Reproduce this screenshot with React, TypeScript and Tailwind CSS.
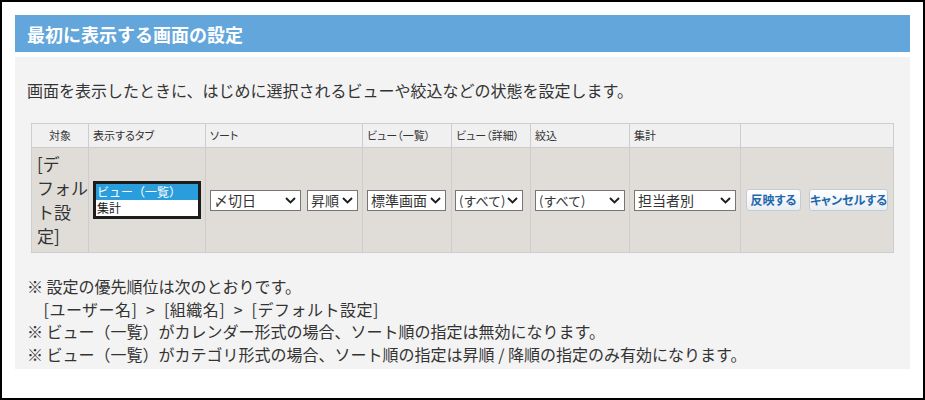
import React from "react";

function Chevron() {
  return (
    <svg width="11" height="7" viewBox="0 0 11 7" className="shrink-0">
      <path d="M1 1L5.5 5.5L10 1" fill="none" stroke="#1e1e1e" strokeWidth="1.9" />
    </svg>
  );
}

function Select({ w, label, small }: { w: string; label: string; small?: boolean }) {
  return (
    <div
      className={`${w} h-[21px] shrink-0 border border-[#767676] bg-white flex items-center justify-between pl-[3px] pr-[4px] ${small ? "text-[13px]" : "text-[14px]"} leading-none text-[#333]`}
    >
      <span className="whitespace-nowrap">{label}</span>
      <Chevron />
    </div>
  );
}

function Btn({ w, label }: { w: string; label: string }) {
  return (
    <div
      className={`${w} h-[22px] shrink-0 rounded-[3px] border border-[#c3ccd6] bg-gradient-to-b from-[#ffffff] to-[#e9eef3] flex items-center justify-center text-[12px] font-bold leading-none text-[#1f68ad] whitespace-nowrap [font-feature-settings:'palt']`}
    >
      {label}
    </div>
  );
}

export default function App() {
  const head = "bg-[#f0f0f0] flex items-center px-[4px] text-[11px] leading-none text-[#333] whitespace-nowrap [font-feature-settings:'palt']";
  const body = "bg-[#e0ddd8] flex items-center px-[4px]";
  return (
    <div className="w-[925px] h-[400px] border-2 border-black box-border pt-[13px] px-[13px] bg-white font-['Noto_Sans_CJK_JP','Noto_Sans',sans-serif] text-[#333]">
      <div className="h-[37px] bg-[#62a6dc] flex items-center pl-[12px] text-[18px] font-bold leading-none text-white">
        最初に表示する画面の設定
      </div>
      <div className="mt-[5px] h-[312px] bg-[#f3f3f3] pt-[21px] pl-[16px] pr-[17px]">
        <div className="-ml-[4px] text-[16px] leading-[24px] text-[#333]">
          画面を表示したときに、はじめに選択されるビューや絞込などの状態を設定します。
        </div>
        <div className="mt-[21px] grid grid-cols-[56px_116px_156px_88px_78px_98px_110px_152px] grid-rows-[23px_104px] gap-px p-px bg-[#cdcdcd] w-[863px]">
          <div className={`${head} justify-center`}>対象</div>
          <div className={head}>表示するタブ</div>
          <div className={head}>ソート</div>
          <div className={head}>ビュー（一覧）</div>
          <div className={head}>ビュー（詳細）</div>
          <div className={head}>絞込</div>
          <div className={head}>集計</div>
          <div className={head}></div>

          <div className="bg-[#e0ddd8] flex items-center pl-[5px] text-[17px] leading-[24px] text-[#333]">
            <div>
              [デ<br />フォル<br />ト設<br />定]
            </div>
          </div>
          <div className={body}>
            <div className="w-[108px] h-[38px] border-[3px] border-[#1c1c1c] bg-white flex flex-col text-[12px] text-[#222]">
              <div className="h-[16px] leading-[16px] bg-[#2a9edd] text-white pl-[1px] whitespace-nowrap">ビュー（一覧）</div>
              <div className="h-[16px] leading-[16px] pl-[1px]">集計</div>
            </div>
          </div>
          <div className={`${body} gap-[6px]`}>
            <Select w="w-[91px]" label="〆切日" />
            <Select w="w-[51px]" label="昇順" />
          </div>
          <div className={body}>
            <Select w="w-[79px]" label="標準画面" />
          </div>
          <div className={`${body} pl-[3px]`}>
            <Select w="w-[68px]" label="(すべて)" small />
          </div>
          <div className={body}>
            <Select w="w-[90px]" label="(すべて)" small />
          </div>
          <div className={body}>
            <Select w="w-[102px]" label="担当者別" />
          </div>
          <div className={`${body} pl-[5px] gap-[8px]`}>
            <Btn w="w-[55px]" label="反映する" />
            <Btn w="w-[79px]" label="キャンセルする" />
          </div>
        </div>
        <div className="mt-[22px] -ml-[4px] text-[16px] leading-[22.7px] text-[#333]">
          <div>※ 設定の優先順位は次のとおりです。</div>
          <div className="tracking-[0.5px]">　[ユーザー名]&ensp;&gt;&ensp;[組織名]&ensp;&gt;&ensp;[デフォルト設定]</div>
          <div>※ ビュー（一覧）がカレンダー形式の場合、ソート順の指定は無効になります。</div>
          <div>※ ビュー（一覧）がカテゴリ形式の場合、ソート順の指定は昇順 / 降順の指定のみ有効になります。</div>
        </div>
      </div>
    </div>
  );
}
